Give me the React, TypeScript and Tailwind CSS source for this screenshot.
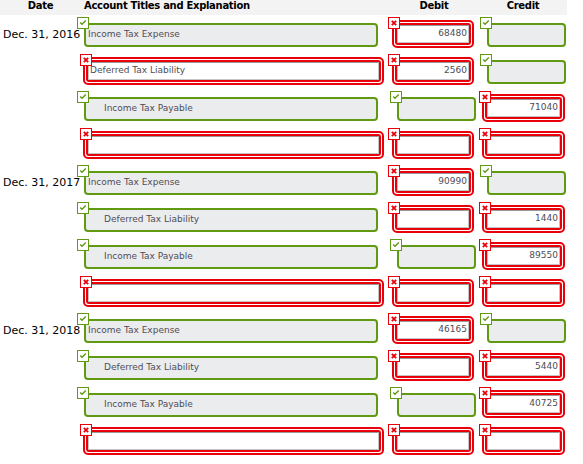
import React from 'react';

type Col = {
  width: string;
  okIcon: string;
  okBox: string;
  badIcon: string;
  badBox: string;
};

// column geometry: icon and box offsets differ for correct / incorrect fields
const ACCOUNT: Col = {
  width: 'w-[311px]',
  okIcon: 'left-0',
  okBox: 'ml-[7px] w-[294px]',
  badIcon: 'left-[3px]',
  badBox: 'ml-[6px] w-[301px]',
};
const DEBIT: Col = {
  width: 'w-[91px]',
  okIcon: 'left-[2px]',
  okBox: 'ml-[9px] w-[79px]',
  badIcon: 'left-0',
  badBox: 'ml-[4px] w-[82px]',
};
const CREDIT: Col = {
  width: 'w-[88px]',
  okIcon: 'left-[1px]',
  okBox: 'ml-[8px] w-[79px]',
  badIcon: 'left-0',
  badBox: 'ml-[3px] w-[83px]',
};

type Cell = { ok: boolean; text?: string; indent?: boolean };

type Row = { date?: string; account: Cell; debit: Cell; credit: Cell };

const rows: Row[] = [
  { date: 'Dec. 31, 2016', account: { ok: true, text: 'Income Tax Expense' }, debit: { ok: false, text: '68480' }, credit: { ok: true } },
  { account: { ok: false, text: 'Deferred Tax Liability' }, debit: { ok: false, text: '2560' }, credit: { ok: true } },
  { account: { ok: true, text: 'Income Tax Payable', indent: true }, debit: { ok: true }, credit: { ok: false, text: '71040' } },
  { account: { ok: false }, debit: { ok: false }, credit: { ok: false } },
  { date: 'Dec. 31, 2017', account: { ok: true, text: 'Income Tax Expense' }, debit: { ok: false, text: '90990' }, credit: { ok: true } },
  { account: { ok: true, text: 'Deferred Tax Liability', indent: true }, debit: { ok: false }, credit: { ok: false, text: '1440' } },
  { account: { ok: true, text: 'Income Tax Payable', indent: true }, debit: { ok: true }, credit: { ok: false, text: '89550' } },
  { account: { ok: false }, debit: { ok: false }, credit: { ok: false } },
  { date: 'Dec. 31, 2018', account: { ok: true, text: 'Income Tax Expense' }, debit: { ok: false, text: '46165' }, credit: { ok: true } },
  { account: { ok: true, text: 'Deferred Tax Liability', indent: true }, debit: { ok: false }, credit: { ok: false, text: '5440' } },
  { account: { ok: true, text: 'Income Tax Payable', indent: true }, debit: { ok: true }, credit: { ok: false, text: '40725' } },
  { account: { ok: false }, debit: { ok: false }, credit: { ok: false } },
];

function CheckIcon() {
  return (
    <svg width="12" height="12" viewBox="0 0 12 12">
      <rect x="0.5" y="0.5" width="11" height="11" fill="#fff" stroke="#5f9a12" />
      <path d="M3.2 5.6 L5 7.3 L8.8 3.6" fill="none" stroke="#5f9a12" strokeWidth="1.4" />
    </svg>
  );
}

function CrossIcon() {
  return (
    <svg width="12" height="12" viewBox="0 0 12 12">
      <rect x="0.5" y="0.5" width="11" height="11" fill="#fff" stroke="#e8000b" />
      <path d="M3.8 3.8 L8.2 8.2 M8.2 3.8 L3.8 8.2" fill="none" stroke="#e8000b" strokeWidth="1.8" />
    </svg>
  );
}

function Field({ cell, col, numeric }: { cell: Cell; col: Col; numeric?: boolean }) {
  if (cell.ok) {
    return (
      <div className={`relative ${col.width} h-full pt-[6px]`}>
        <span className={`absolute top-0 z-10 ${col.okIcon} flex`}>
          <CheckIcon />
        </span>
        <div
          className={`${col.okBox} h-[24px] rounded-[4px] border-2 border-[#5f9a12] bg-[#ebecee] flex items-center text-[9px] text-[#4d4d55] ${
            numeric ? 'justify-end pr-[2px]' : cell.indent ? 'pl-[18px]' : 'pl-[2px]'
          }`}
        >
          {cell.text}
        </div>
      </div>
    );
  }
  return (
    <div className={`relative ${col.width} h-full pt-[3px]`}>
      <span className={`absolute top-0 z-10 ${col.badIcon} flex`}>
        <CrossIcon />
      </span>
      <div className={`${col.badBox} h-[28px] rounded-[5px] border-2 border-[#e8000b] bg-white p-px`}>
        <div className="h-full rounded-[3px] border-2 border-[#e8000b]">
          <div
            className={`h-full border border-[#c4c4c4] border-t-[#9a9a9a] bg-white flex items-center text-[9px] text-[#4d4d55] ${
              numeric ? 'justify-end pr-[1px]' : 'pl-[1px]'
            }`}
          >
            {cell.text}
          </div>
        </div>
      </div>
    </div>
  );
}

export default function App() {
  return (
    <div className="w-[583px] h-[464px] bg-white text-black font-['DejaVu_Sans',Verdana,sans-serif] overflow-hidden">
      {/* Header */}
      <div className="flex h-[15px] w-[567px] bg-[#f3f3f3] text-[10px] font-bold leading-[12px] tracking-[-0.3px]">
        <div className="w-[84px] text-center pr-[3px]">Date</div>
        <div className="w-[304px]">Account Titles and Explanation</div>
        <div className="w-[91px] text-center pl-[1px]">Debit</div>
        <div className="w-[88px] text-center">Credit</div>
      </div>

      {/* Journal rows */}
      <div className="flex flex-col pt-[2px]">
        {rows.map((r, i) => (
          <div key={i} className="flex h-[37px]">
            <div className="w-[77px] pl-[3px] pt-[11px] text-[11px] leading-[13px] whitespace-nowrap">{r.date}</div>
            <Field cell={r.account} col={ACCOUNT} />
            <Field cell={r.debit} col={DEBIT} numeric />
            <Field cell={r.credit} col={CREDIT} numeric />
          </div>
        ))}
      </div>
    </div>
  );
}
